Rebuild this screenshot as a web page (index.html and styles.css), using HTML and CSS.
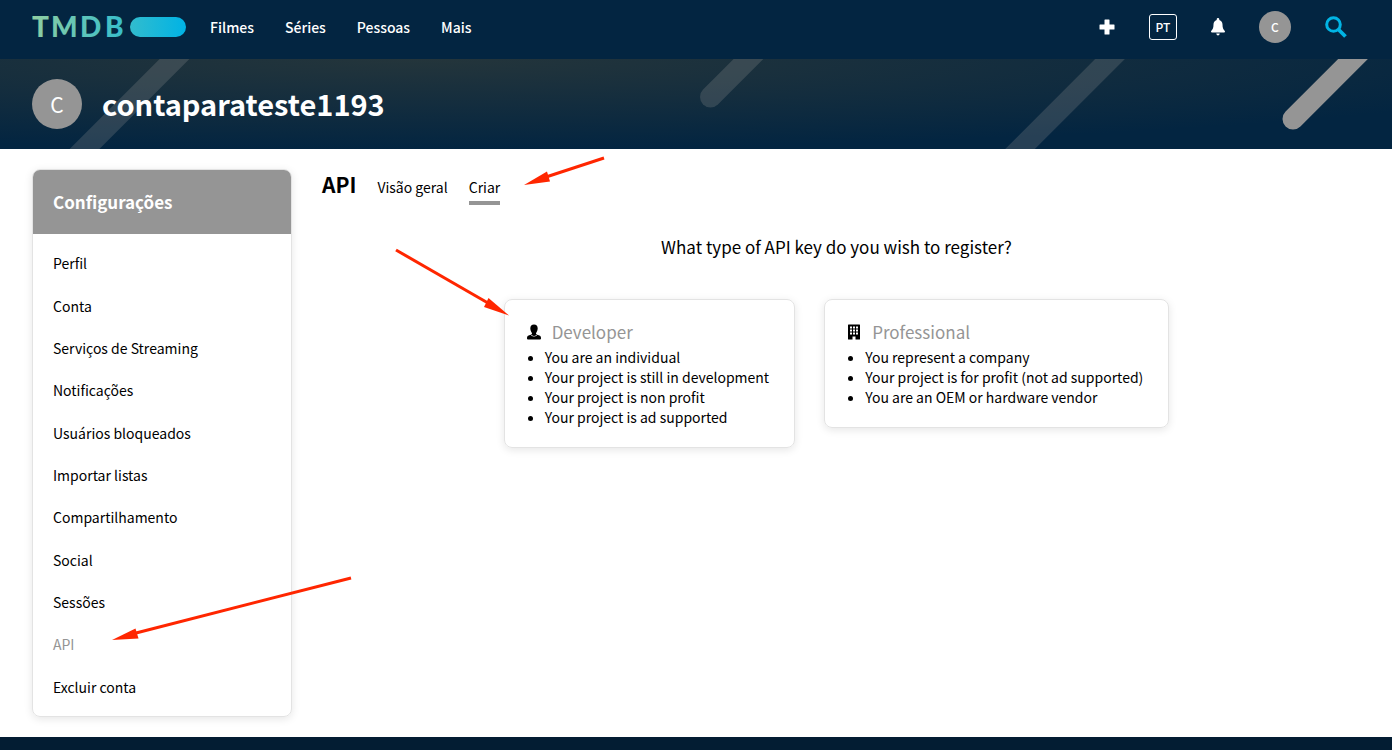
FILE: index.html
```html
<!DOCTYPE html>
<html lang="pt">
<head>
<meta charset="utf-8">
<meta name="viewport" content="width=device-width, initial-scale=1">
<title>API — TMDB</title>
<link rel="stylesheet" href="styles.css">
</head>
<body>
<header class="topbar">
  <a class="logo" href="#" aria-label="TMDB">
    <svg width="154" height="36" viewBox="0 -8 154 36">
      <defs>
        <linearGradient id="brand" gradientUnits="userSpaceOnUse" x1="0" y1="0" x2="154" y2="0">
          <stop offset="0" stop-color="#90cea1"/>
          <stop offset=".56" stop-color="#3cbec9"/>
          <stop offset="1" stop-color="#00b3e5"/>
        </linearGradient>
      </defs>
      <text class="logo-text" x="0 19 48 73" y="20" fill="url(#brand)">TMDB</text>
      <rect x="98" width="56" height="20" rx="10" fill="url(#brand)"/>
    </svg>
  </a>
  <nav class="topnav">
    <a href="#">Filmes</a>
    <a href="#">Séries</a>
    <a href="#">Pessoas</a>
    <a href="#">Mais</a>
  </nav>
  <div class="tools">
    <button class="tool" aria-label="Adicionar">
      <svg width="16" height="16" viewBox="0 0 16 16"><path fill="#fff" d="M6 .5h4q.5 0 .5.500v4.500H15q.5 0 .5.500v4q0 .5-.5.500h-4.500V15q0 .5-.5.500H6q-.5 0-.5-.5v-4.500H1q-.5 0-.5-.5V6q0-.5.500-.5h4.500V1q0-.5.500-.5z"/></svg>
    </button>
    <button class="language">PT</button>
    <button class="tool" aria-label="Notificações">
      <svg width="14" height="18" viewBox="0 0 14 18"><path fill="#fff" d="M7 0c.8 0 1.300.6 1.300 1.300v.6c2.100.6 3.200 2.300 3.200 4.700 0 3.600.8 5 2.300 6.400.4.400.2 1.500-.6 1.500H.8c-.8 0-1-1.100-.6-1.500 1.500-1.400 2.300-2.800 2.300-6.400 0-2.400 1.100-4.100 3.200-4.700v-.6C5.700.6 6.200 0 7 0zM5.300 15.600h3.400c0 1.100-.7 1.900-1.700 1.900s-1.700-.8-1.700-1.900z"/></svg>
    </button>
    <a class="avatar avatar-small" href="#">C</a>
    <button class="tool" aria-label="Pesquisar">
      <svg width="22" height="22" viewBox="0 0 22 22" fill="none" stroke="#01b4e4"><circle cx="8.500" cy="8.500" r="6.800" stroke-width="3"/><path d="M13.500 13.500l7 7" stroke-width="3.800"/></svg>
    </button>
  </div>
</header>

<section class="banner">
  <svg class="stripes" width="1392" height="90" viewBox="0 0 1392 90" fill="none" stroke-width="21" stroke-linecap="round" aria-hidden="true">
    <g stroke="#959595" stroke-opacity=".25">
      <path d="M194.500-20L64.500 110"/>
      <path d="M768.500-20L710.500 38"/>
      <path d="M1130-20L1000 110"/>
    </g>
    <path stroke="#959595" d="M1373-20L1293 60"/>
  </svg>
  <a class="avatar avatar-large" href="#">C</a>
  <h1><a href="#">contaparateste1193</a></h1>
</section>

<main class="page">
  <aside class="settings">
    <h2>Configurações</h2>
    <ul>
      <li><a href="#">Perfil</a></li>
      <li><a href="#">Conta</a></li>
      <li><a href="#">Serviços de Streaming</a></li>
      <li><a href="#">Notificações</a></li>
      <li><a href="#">Usuários bloqueados</a></li>
      <li><a href="#">Importar listas</a></li>
      <li><a href="#">Compartilhamento</a></li>
      <li><a href="#">Social</a></li>
      <li><a href="#">Sessões</a></li>
      <li><a class="current" href="#">API</a></li>
      <li><a href="#">Excluir conta</a></li>
    </ul>
  </aside>

  <div class="content">
    <div class="tabs">
      <h2>API</h2>
      <a href="#">Visão geral</a>
      <a class="active" href="#">Criar</a>
    </div>
    <h3 class="question">What type of API key do you wish to register?</h3>
    <div class="choices">
      <section class="card">
        <h4>
          <svg width="16" height="16" viewBox="0 0 16 16"><path d="M8 .5c2.400 0 3.700 1.600 3.700 3.900 0 1.200-.4 2.500-1 3.500-.3.600-.7 1-.7 1.400 0 1 .6 1.300 2 1.700 2.200.6 3 1.300 3 3v.5q0 1-1 1H2q-1 0-1-1V14c0-1.700.8-2.400 3-3 1.400-.4 2-.7 2-1.700 0-.4-.4-.8-.7-1.400-.6-1-1-2.300-1-3.500C4.300 2.100 5.600.5 8 .5z"/><path fill="#fff" d="M5.500 10.800Q8 13.200 10.500 10.800L10.900 11.400Q8 13.700 5.100 11.400z"/></svg>
          <a href="#">Developer</a>
        </h4>
        <ul>
          <li>You are an individual</li>
          <li>Your project is still in development</li>
          <li>Your project is non profit</li>
          <li>Your project is ad supported</li>
        </ul>
      </section>
      <section class="card">
        <h4>
          <svg width="16" height="16" viewBox="0 0 16 16"><path fill-rule="evenodd" d="M2 1q0-.5.500-.5h11q.5 0 .5.500v14q0 .5-.5.500h-4V12.500h-3v3h-4q-.5 0-.5-.5zM4 2.500v2h2v-2zM7 2.500v2h2v-2zM10 2.500v2h2v-2zM4 5.500v2h2v-2zM7 5.500v2h2v-2zM10 5.500v2h2v-2zM4 8.500v2h2v-2zM7 8.500v2h2v-2zM10 8.500v2h2v-2z"/></svg>
          <a href="#">Professional</a>
        </h4>
        <ul>
          <li>You represent a company</li>
          <li>Your project is for profit (not ad supported)</li>
          <li>You are an OEM or hardware vendor</li>
        </ul>
      </section>
    </div>
  </div>
</main>

<footer class="footer"></footer>

<svg class="arrows" width="620" height="650" viewBox="0 0 620 650" fill="#ff2600" stroke="#ff2600" aria-hidden="true">
  <g stroke-width="3">
    <path d="M604 158L546 177"/>
    <path d="M396 250L488 303"/>
    <path d="M351 578L136 633"/>
  </g>
  <g stroke="none">
    <path d="M524 185L547 171.500L550 181.500z"/>
    <path d="M509 315.500L488.500 298L484 307z"/>
    <path d="M112 640L135.500 628.500L138.500 638.500z"/>
  </g>
</svg>
</body>
</html>
```

FILE: styles.css
```css
* {
  box-sizing: border-box;
}

body {
  position: relative;
  display: flex;
  flex-direction: column;
  min-height: 100vh;
  margin: 0;
  background: #fff;
  color: #000;
  font-family: "Noto Sans CJK JP", "Noto Sans", sans-serif;
  font-size: 14px;
  line-height: 20px;
}

h1, h2, h3, h4, ul {
  margin: 0;
  padding: 0;
}

a {
  color: inherit;
  text-decoration: none;
}

button {
  padding: 0;
  border: 0;
  background: none;
  color: inherit;
  font: inherit;
  cursor: pointer;
}

svg {
  display: block;
}

.topbar {
  display: flex;
  align-items: center;
  height: 59px;
  padding: 0 45px 5px 32px;
  background: #032541;
  color: #fff;
  font-weight: 500;
}

.logo-text {
  font-family: Lato, sans-serif;
  font-size: 28px;
  font-weight: 900;
}

.topnav {
  display: flex;
  gap: 31px;
  margin-left: 24px;
}

.tools {
  display: flex;
  align-items: center;
  gap: 34px;
  margin-left: auto;
}

.language {
  width: 28px;
  height: 26px;
  border: 1px solid #fff;
  border-radius: 3px;
  font-size: 12px;
  line-height: 20px;
}

.avatar {
  display: flex;
  align-items: center;
  justify-content: center;
  border-radius: 50%;
  background: #959595;
  color: #fff;
}

.avatar-small {
  width: 32px;
  height: 32px;
  font-size: 12px;
}

.avatar-large {
  width: 50px;
  height: 50px;
  font-size: 21px;
}

.banner {
  position: relative;
  display: flex;
  align-items: center;
  gap: 20px;
  height: 90px;
  padding: 0 32px;
  overflow: hidden;
  background: radial-gradient(ellipse 1200px 90px at 420px 0, #24353b, #032541) #032541;
  color: #fff;
}

.banner > * {
  position: relative;
}

.banner .stripes {
  position: absolute;
  top: 0;
  right: 0;
}

.banner h1 {
  padding-bottom: 2px;
  font-size: 29px;
  font-weight: 700;
  line-height: 32px;
}

.page {
  display: flex;
  flex: 1;
  gap: 30px;
  padding: 20px 41px 20px 32px;
}

.settings,
.card {
  border: 1px solid #e3e3e3;
  border-radius: 8px;
  box-shadow: 0 2px 8px rgba(0, 0, 0, .1);
}

.settings {
  display: flex;
  flex: 0 0 260px;
  flex-direction: column;
  overflow: hidden;
}

.settings h2 {
  padding: 20px;
  background: #959595;
  color: #fff;
  font-size: 17px;
  font-weight: 700;
  line-height: 24px;
}

.settings ul {
  display: grid;
  flex: 1;
  grid-auto-rows: 1fr;
  align-items: center;
  padding: 8px 20px;
  list-style: none;
}

.settings .current,
.card h4 a {
  color: #959595;
}

.content {
  flex: 1;
}

.tabs {
  display: flex;
  align-items: baseline;
  gap: 21px;
}

.tabs h2 {
  font-size: 21px;
  font-weight: 700;
  line-height: 30px;
}

.tabs a {
  padding-bottom: 4px;
  border-bottom: 4px solid transparent;
}

.tabs .active {
  border-color: #959595;
}

.question {
  margin: 30px 0 40px;
  font-size: 17px;
  font-weight: 400;
  line-height: 24px;
  text-align: center;
}

.choices {
  display: flex;
  align-items: flex-start;
  justify-content: center;
  gap: 29px;
}

.card {
  padding: 19px 25px 20px 20px;
}

.card h4 {
  display: flex;
  align-items: center;
  gap: 10px;
  margin-bottom: 2px;
  padding-left: 1px;
  font-size: 17px;
  font-weight: 400;
  line-height: 26px;
}

.card ul {
  padding-left: 20px;
}

.footer {
  height: 13px;
  background: #031d33;
}

.arrows {
  position: absolute;
  top: 0;
  left: 0;
  pointer-events: none;
}
```
